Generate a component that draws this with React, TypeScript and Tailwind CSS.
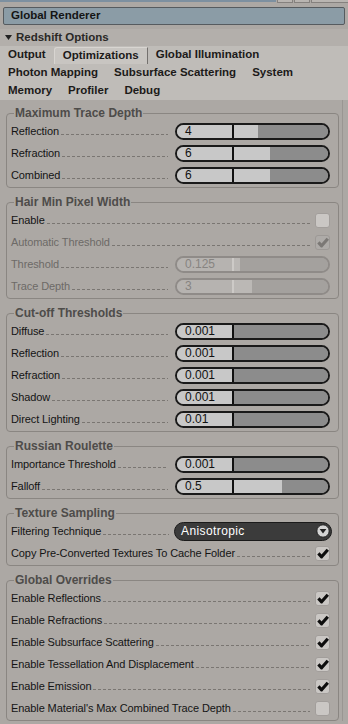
import type { ReactNode } from "react";

type Ctl =
  | { kind: "field"; value: string; fill: number }
  | { kind: "check"; checked: boolean }
  | { kind: "select"; value: string };

type Item = { label: string; disabled?: boolean; ctl: Ctl };

const groups: { title: string; items: Item[] }[] = [
  {
    title: "Maximum Trace Depth",
    items: [
      { label: "Reflection", ctl: { kind: "field", value: "4", fill: 24 } },
      { label: "Refraction", ctl: { kind: "field", value: "6", fill: 36 } },
      { label: "Combined", ctl: { kind: "field", value: "6", fill: 36 } },
    ],
  },
  {
    title: "Hair Min Pixel Width",
    items: [
      { label: "Enable", ctl: { kind: "check", checked: false } },
      { label: "Automatic Threshold", disabled: true, ctl: { kind: "check", checked: true } },
      { label: "Threshold", disabled: true, ctl: { kind: "field", value: "0.125", fill: 6 } },
      { label: "Trace Depth", disabled: true, ctl: { kind: "field", value: "3", fill: 18 } },
    ],
  },
  {
    title: "Cut-off Thresholds",
    items: [
      { label: "Diffuse", ctl: { kind: "field", value: "0.001", fill: 0 } },
      { label: "Reflection", ctl: { kind: "field", value: "0.001", fill: 0 } },
      { label: "Refraction", ctl: { kind: "field", value: "0.001", fill: 0 } },
      { label: "Shadow", ctl: { kind: "field", value: "0.001", fill: 0 } },
      { label: "Direct Lighting", ctl: { kind: "field", value: "0.01", fill: 0 } },
    ],
  },
  {
    title: "Russian Roulette",
    items: [
      { label: "Importance Threshold", ctl: { kind: "field", value: "0.001", fill: 0 } },
      { label: "Falloff", ctl: { kind: "field", value: "0.5", fill: 48 } },
    ],
  },
  {
    title: "Texture Sampling",
    items: [
      { label: "Filtering Technique", ctl: { kind: "select", value: "Anisotropic" } },
      { label: "Copy Pre-Converted Textures To Cache Folder", ctl: { kind: "check", checked: true } },
    ],
  },
  {
    title: "Global Overrides",
    items: [
      { label: "Enable Reflections", ctl: { kind: "check", checked: true } },
      { label: "Enable Refractions", ctl: { kind: "check", checked: true } },
      { label: "Enable Subsurface Scattering", ctl: { kind: "check", checked: true } },
      { label: "Enable Tessellation And Displacement", ctl: { kind: "check", checked: true } },
      { label: "Enable Emission", ctl: { kind: "check", checked: true } },
      { label: "Enable Material's Max Combined Trace Depth", ctl: { kind: "check", checked: false } },
    ],
  },
];

const tabRows = [
  ["Output", "Optimizations", "Global Illumination"],
  ["Photon Mapping", "Subsurface Scattering", "System"],
  ["Memory", "Profiler", "Debug"],
];

function Field({ value, fill, disabled }: { value: string; fill: number; disabled?: boolean }) {
  return (
    <div
      className={`flex h-[17px] w-[155px] shrink-0 overflow-hidden rounded-full border-2 ${
        disabled ? "border-[#8f8b88]" : "border-[#1a1a1a]"
      }`}
    >
      <div
        className={`w-[55px] shrink-0 pl-[8px] text-[12px] leading-[13px] ${
          disabled ? "bg-[#b6b3b0] text-[#878481]" : "bg-[#c8c8c8] text-[#111]"
        }`}
      >
        {value}
      </div>
      <div className={`w-[2px] shrink-0 ${disabled ? "bg-[#cdcac7]" : "bg-[#111]"}`} />
      <div className={`flex flex-1 ${disabled ? "bg-[#a4a19e]" : "bg-[#8c8c8c]"}`}>
        <div style={{ width: fill }} className={disabled ? "bg-[#bbb8b5]" : "bg-[#c8c8c8]"} />
      </div>
    </div>
  );
}

function Check({ checked, disabled }: { checked: boolean; disabled?: boolean }) {
  return (
    <div
      className={`flex h-[15px] w-[15px] shrink-0 items-center justify-center rounded-[3px] border ${
        disabled ? "border-[#9d9996] bg-[#aeaba8]" : "border-[#a29e9b] bg-[#cac7c4]"
      }`}
    >
      {checked && (
        <svg width="12" height="11" viewBox="0 0 12 11">
          <path
            d="M1.4 5.4 L4.6 8.8 L10.8 1.8"
            fill="none"
            stroke={disabled ? "#7b7875" : "#0d0d0d"}
            strokeWidth="3.2"
            strokeLinejoin="round"
          />
        </svg>
      )}
    </div>
  );
}

function Select({ value }: { value: string }) {
  return (
    <div className="-mr-[2px] flex h-[19px] w-[158px] shrink-0 items-center rounded-full border border-[#1a1a1a] bg-[#3b3b3b] pl-[6px] pr-[1px]">
      <span className="flex-1 text-[12px] leading-[14px] tracking-[0.4px] text-white">{value}</span>
      <svg width="14" height="14" viewBox="0 0 14 14">
        <circle cx="7" cy="7" r="6.2" fill="#d4d4d4" stroke="#1e1e1e" strokeWidth="1" />
        <path d="M3.6 5 L10.4 5 L7 9.6 Z" fill="#222" />
      </svg>
    </div>
  );
}

function Row({ item }: { item: Item }) {
  const { label, disabled, ctl } = item;
  return (
    <div className="flex h-[22px] items-center pl-[4px] pr-[8px]">
      <span
        className={`whitespace-nowrap text-[11px] leading-[13px] tracking-[-0.1px] ${
          disabled ? "text-[#6d6a67]" : "text-[#141414]"
        }`}
      >
        {label}
      </span>
      <div
        className={`ml-[2px] mt-[6px] h-[1px] flex-1 bg-[linear-gradient(to_right,#7a7672_3px,transparent_3px)] bg-[length:5px_1px] bg-repeat-x ${
          ctl.kind === "field" ? "mr-[7px]" : "mr-[5px]"
        }`}
      />
      {ctl.kind === "field" && <Field value={ctl.value} fill={ctl.fill} disabled={disabled} />}
      {ctl.kind === "check" && <Check checked={ctl.checked} disabled={disabled} />}
      {ctl.kind === "select" && <Select value={ctl.value} />}
    </div>
  );
}

function Group({ title, children }: { title: string; children: ReactNode }) {
  return (
    <fieldset className="ml-[6px] w-[333px] rounded-[4px] border border-[#8a8682] pb-[1px]">
      <legend className="ml-[7px] px-[1px] text-[12px] font-bold leading-[14px] text-[#4e4c4a]">{title}</legend>
      {children}
    </fieldset>
  );
}

export default function App() {
  return (
    <div className="h-[724px] w-[348px] overflow-hidden bg-[#aca8a4] font-['Liberation_Sans',Arial,sans-serif] text-[#141414]">
      {/* window strip */}
      <div className="flex h-[4px]">
        <div className="h-[2px] w-[276px] bg-[#7d90a0]" />
        <div className="ml-[1px] h-[3px] w-[16px] border-x border-b border-[#85817e] bg-[#b9b5b1]" />
        <div className="ml-[1px] h-[3px] w-[16px] border-x border-b border-[#85817e] bg-[#b9b5b1]" />
        <div className="ml-[1px] h-[3px] flex-1 border-l border-b border-[#85817e] bg-[#b9b5b1]" />
      </div>

      <div className="mx-[3px] mt-[3px] flex h-[18px] items-center rounded-[2px] border border-[#565b5f] bg-[#8b9ca6] pl-[7px] text-[11.5px] font-bold">
        Global Renderer
      </div>

      <div className="mt-[4px] flex h-[17px] items-center bg-[#b3afab] pl-[5px] text-[11.5px] font-bold text-[#2a2826]">
        <svg width="7" height="5" viewBox="0 0 7 5" className="mr-[4px]">
          <path d="M0 0 L7 0 L3.5 5 Z" fill="#222" />
        </svg>
        Redshift Options
      </div>

      <div className="bg-[#bfbcb8]">
        {tabRows.map((row, r) => (
          <div key={r} className="flex h-[18px] items-stretch">
            {row.map((t) => (
              <div
                key={t}
                className={`flex items-center px-[8px] text-[11.5px] font-bold text-[#1c1a19] ${
                  t === "Optimizations"
                    ? "mt-[1px] rounded-tl-[3px] border-l border-r border-t border-l-[#d8d5d1] border-r-[#74716e] border-t-[#d8d5d1] bg-[#c8c5c1] px-[7px]"
                    : ""
                }`}
              >
                {t}
              </div>
            ))}
          </div>
        ))}
      </div>

      <div className="flex w-[343px] flex-col gap-[7px] border-r border-[#9a9692] pt-[6px]">
        {groups.map((g) => (
          <Group key={g.title} title={g.title}>
            {g.items.map((it) => (
              <Row key={it.label} item={it} />
            ))}
          </Group>
        ))}
      </div>
    </div>
  );
}
